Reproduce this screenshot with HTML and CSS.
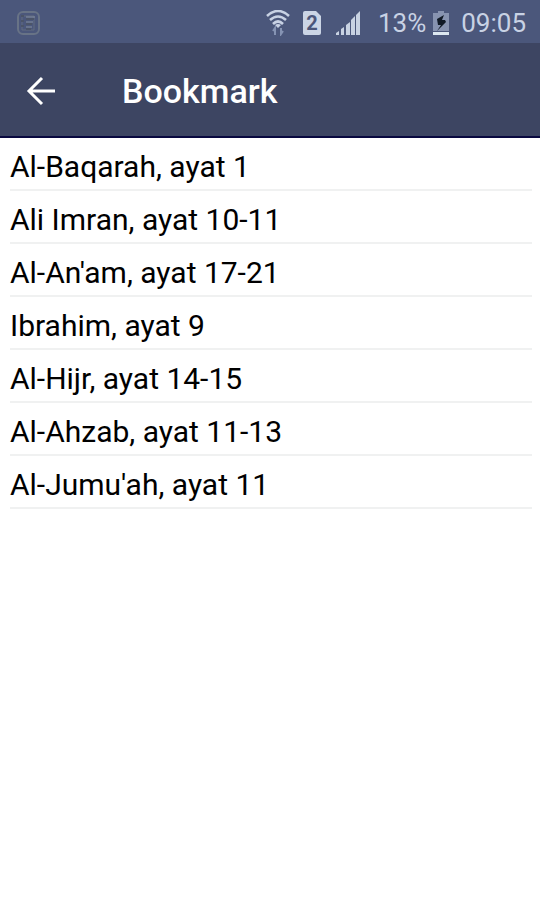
FILE: index.html
```
<!DOCTYPE html>
<html lang="id">
<head>
  <meta charset="UTF-8" />
  <meta name="viewport" content="width=device-width, initial-scale=1.0"/>
  <title>Bookmark</title>
  <link rel="stylesheet" href="styles.css">
</head>
<body>
  <div class="status-bar">
    <svg class="note-icon" width="24" height="26" viewBox="0 0 24 26" fill="none" stroke="#687386" stroke-width="2">
      <rect x="2" y="2" width="21" height="22" rx="5"/>
      <path d="M6 20V6h12v14z" stroke="#626c80" stroke-width="1"/>
      <path d="M5 6h3M10 9h8M5 11h3M10 14h6M5 16h3M10 19h5" stroke="#4b5468"/>
      <path d="M10 7h9M10 12h7M10 17h6" stroke="#8590a0" stroke-width="1"/>
    </svg>

    <svg class="wifi-icon" width="24" height="26" viewBox="0 0 24 26" fill="none" stroke="#c8d2e4" stroke-width="2.6">
      <path d="M1 6Q12-4 23 6"/>
      <path d="M4 10Q12 3 20 10"/>
      <path d="M7 14Q12 9 17 14"/>
      <path d="M9 15q3-2 6 0l-3 3z" fill="#c8d2e4" stroke="none"/>
      <path d="M9 25v-7l-2 3M15 18v6l2-3" stroke="#8593b3" stroke-width="2"/>
    </svg>

    <svg class="sim-icon" width="20" height="26" viewBox="0 0 20 26">
      <path d="M3 1h11l5 5v17q0 2-2 2H3q-2 0-2-2V3q0-2 2-2z" fill="#cbd5e5"/>
      <text class="sim-number" x="10" y="20" text-anchor="middle">2</text>
    </svg>

    <svg class="signal-icon" width="24" height="26" viewBox="0 0 24 26" fill="#c8d2e2">
      <path d="M0 25v-2l3-2v4zM5 25v-6l3-2v8zM10 25V15l4-3v13zM15 25V10l4-4v19zM20 25V5l4-4v24z"/>
    </svg>

    <span class="battery-level">13%</span>

    <svg class="battery-icon" width="16" height="26" viewBox="0 0 16 26">
      <path d="M5 1h6v2h5v18H0V3h5z" fill="#8793b0"/>
      <path d="M0 22h16v3H0z" fill="#dce7f0"/>
      <path d="M11 5L4 9l1 6h3l-4 6 9-9-1-2H9z" fill="#111a26"/>
    </svg>

    <span class="clock">09:05</span>
  </div>

  <header>
    <a class="back" href="index.html" aria-label="Back">
      <svg width="30" height="30" viewBox="0 0 30 30" fill="none" stroke="#fff" stroke-width="3">
        <path d="M29 15H3M16 2L3 15l13 13"/>
      </svg>
    </a>
    <h1>Bookmark</h1>
  </header>

  <main>
    <ul class="bookmarks">
      <li><a href="#">Al-Baqarah, ayat 1</a></li>
      <li><a href="#">Ali Imran, ayat 10-11</a></li>
      <li><a href="#">Al-An'am, ayat 17-21</a></li>
      <li><a href="#">Ibrahim, ayat 9</a></li>
      <li><a href="#">Al-Hijr, ayat 14-15</a></li>
      <li><a href="#">Al-Ahzab, ayat 11-13</a></li>
      <li><a href="#">Al-Jumu'ah, ayat 11</a></li>
    </ul>
  </main>
</body>
</html>
```

FILE: styles.css
```
body {
  margin: 0;
  font-family: Roboto, sans-serif;
  background-color: #fff;
  color: #000;
}

.status-bar {
  display: flex;
  align-items: center;
  box-sizing: border-box;
  height: 43px;
  padding: 2px 14px 0 16px;
  background-color: #4b577b;
  color: #c8d2e4;
  font-size: 26px;
}

.wifi-icon {
  margin-left: auto;
}

.sim-icon {
  margin-left: 12px;
}

.sim-number {
  fill: #4b567a;
  font-size: 20px;
  font-weight: 700;
}

.signal-icon {
  margin-left: 14px;
}

.battery-level {
  margin-left: 18px;
}

.battery-icon {
  margin-left: 7px;
}

.clock {
  margin-left: 12px;
}

header {
  display: flex;
  align-items: center;
  height: 91px;
  padding: 2px 26px 0;
  background-color: #3d4562;
  border-bottom: 2px solid #09083f;
}

.back {
  display: flex;
}

header h1 {
  margin: 0 0 0 66px;
  font-size: 34px;
  font-weight: 500;
  color: #fff;
}

.bookmarks {
  list-style: none;
  margin: 0;
  padding: 0 8px 0 10px;
}

.bookmarks li {
  border-bottom: 2px solid #f0f1f1;
}

.bookmarks a {
  display: block;
  padding-top: 7px;
  font-size: 30px;
  line-height: 44px;
  color: #000;
  text-decoration: none;
}
```
